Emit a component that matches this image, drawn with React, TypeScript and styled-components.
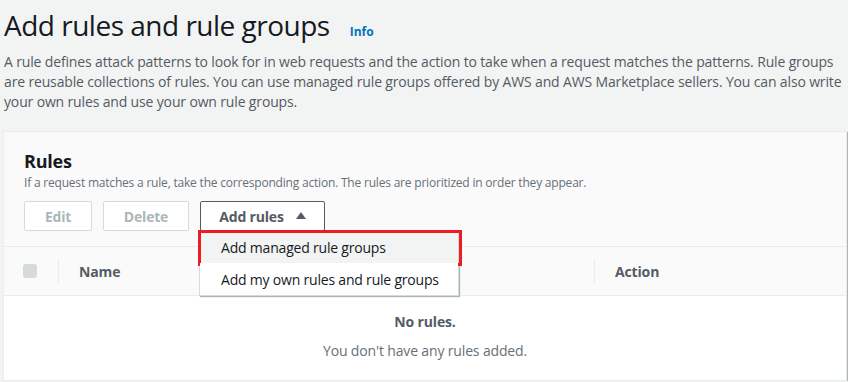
import styled, { createGlobalStyle } from "styled-components";

const GlobalStyle = createGlobalStyle`
    body {
        margin: 0;
        background: #f2f3f3;
        font-family: "Open Sans", "Noto Sans", Arial, sans-serif;
        color: #16191f;
        letter-spacing: -0.15px;
    }
`

const Page = styled.div`
    padding: 0 1px 0 3px;
`

const TitleRow = styled.div`
    display: flex;
    align-items: baseline;
    padding-left: 1px;
    height: 48px;
`

const TitleText = styled.h1`
    margin: 0;
    font-size: 28px;
    font-weight: 400;
    line-height: 50px;
    letter-spacing: -0.5px;
    color: #16191f;
`

const InfoLink = styled.a`
    margin-left: 20px;
    font-size: 12px;
    font-weight: 700;
    letter-spacing: 0;
    color: #0073bb;
    text-decoration: none;
`

const Intro = styled.p`
    margin: 4px 0 0 1px;
    font-size: 14px;
    line-height: 20px;
    color: #545b64;
    height: 79px;
`

const Panel = styled.section`
    background: #fff;
    border: 1px solid #eaeded;
    box-shadow: 1px 1px 1px 0 #aab7b8;
`

const PanelHeader = styled.div`
    background: #fafafa;
    padding: 17px 20px 15px 20px;
    border-bottom: 1px solid #eaeded;
`

const PanelTitle = styled.h2`
    margin: 0;
    font-size: 18px;
    font-weight: 700;
    line-height: 24px;
    letter-spacing: -0.2px;
    color: #16191f;
`

const PanelDescription = styled.p`
    margin: 0;
    font-size: 12px;
    line-height: 20px;
    letter-spacing: -0.2px;
    color: #687078;
`

const Toolbar = styled.div`
    display: flex;
    gap: 11px;
    margin-top: 8px;
`

const ActionButton = styled.button<{ $width: number; $disabled?: boolean }>`
    position: relative;
    display: flex;
    align-items: center;
    justify-content: center;
    gap: 12px;
    width: ${({ $width }) => $width}px;
    height: 30px;
    padding: 0;
    background: #fff;
    border: 1px solid ${({ $disabled }) => ($disabled ? "#d5dbdb" : "#545b64")};
    border-radius: 2px;
    font-family: inherit;
    font-size: 14px;
    font-weight: 700;
    letter-spacing: -0.2px;
    color: ${({ $disabled }) => ($disabled ? "#aab7b8" : "#545b64")};
`

const Caret = styled.span`
    width: 0;
    height: 0;
    border-left: 5px solid transparent;
    border-right: 5px solid transparent;
    border-bottom: 7px solid #545b64;
    margin-top: -2px;
`

const Menu = styled.ul`
    position: absolute;
    top: 28px;
    left: -2px;
    width: 258px;
    margin: 0;
    padding: 0;
    list-style: none;
    background: #fff;
    border: 1px solid #d5dbdb;
    box-shadow: 1px 1px 1px 0 #aab7b8;
    z-index: 10;
    text-align: left;
`

const MenuItem = styled.li<{ $active?: boolean }>`
    position: relative;
    height: 32px;
    padding-left: 21px;
    display: flex;
    align-items: center;
    font-size: 14px;
    font-weight: 400;
    color: #16191f;
    background: ${({ $active }) => ($active ? "#f2f3f3" : "#fff")};

    &::after {
        content: "";
        display: ${({ $active }) => ($active ? "block" : "none")};
        position: absolute;
        top: -1px;
        left: -2px;
        right: -4px;
        bottom: -3px;
        border: 3px solid #ec1c24;
        pointer-events: none;
    }
`

const TableHead = styled.div`
    display: grid;
    grid-template-columns: 54px 536px 1fr;
    height: 48px;
    background: #fafafa;
    border-bottom: 1px solid #eaeded;
    align-items: center;
`

const HeadCell = styled.div<{ $divider?: boolean }>`
    height: 24px;
    display: flex;
    align-items: center;
    padding-left: ${({ $divider }) => ($divider ? "20px" : "19px")};
    border-left: ${({ $divider }) => ($divider ? "1px solid #eaeded" : "none")};
    font-size: 14px;
    font-weight: 700;
    color: #545b64;
`

const Checkbox = styled.span`
    width: 14px;
    height: 14px;
    border-radius: 3px;
    background: #d5dbdb;
`

const EmptyState = styled.div`
    height: 84px;
    display: flex;
    flex-direction: column;
    align-items: center;
    padding-top: 15px;
    box-sizing: border-box;
    font-size: 14px;
    color: #687078;
`

const EmptyTitle = styled.div`
    font-weight: 700;
    color: #545b64;
    line-height: 22px;
`

const EmptyText = styled.div`
    margin-top: 8px;
    line-height: 20px;
`

export default function App() {
    return (
        <Page>
            <GlobalStyle />
            <TitleRow>
                <TitleText>Add rules and rule groups</TitleText>
                <InfoLink href="#">Info</InfoLink>
            </TitleRow>
            <Intro>
                A rule defines attack patterns to look for in web requests and the action to take when a request matches the patterns. Rule groups are reusable collections of rules. You can use managed rule groups offered by AWS and AWS Marketplace sellers. You can also write your own rules and use your own rule groups.
            </Intro>

            <Panel>
                <PanelHeader>
                    <PanelTitle>Rules</PanelTitle>
                    <PanelDescription>
                        If a request matches a rule, take the corresponding action. The rules are prioritized in order they appear.
                    </PanelDescription>
                    <Toolbar>
                        <ActionButton $width={68} $disabled>Edit</ActionButton>
                        <ActionButton $width={86} $disabled>Delete</ActionButton>
                        <ActionButton $width={125}>
                            Add rules
                            <Caret />
                            <Menu>
                                <MenuItem $active>Add managed rule groups</MenuItem>
                                <MenuItem>Add my own rules and rule groups</MenuItem>
                            </Menu>
                        </ActionButton>
                    </Toolbar>
                </PanelHeader>

                <TableHead>
                    <HeadCell><Checkbox /></HeadCell>
                    <HeadCell $divider>Name</HeadCell>
                    <HeadCell $divider>Action</HeadCell>
                </TableHead>

                <EmptyState>
                    <EmptyTitle>No rules.</EmptyTitle>
                    <EmptyText>You don't have any rules added.</EmptyText>
                </EmptyState>
            </Panel>
        </Page>
    );
}
